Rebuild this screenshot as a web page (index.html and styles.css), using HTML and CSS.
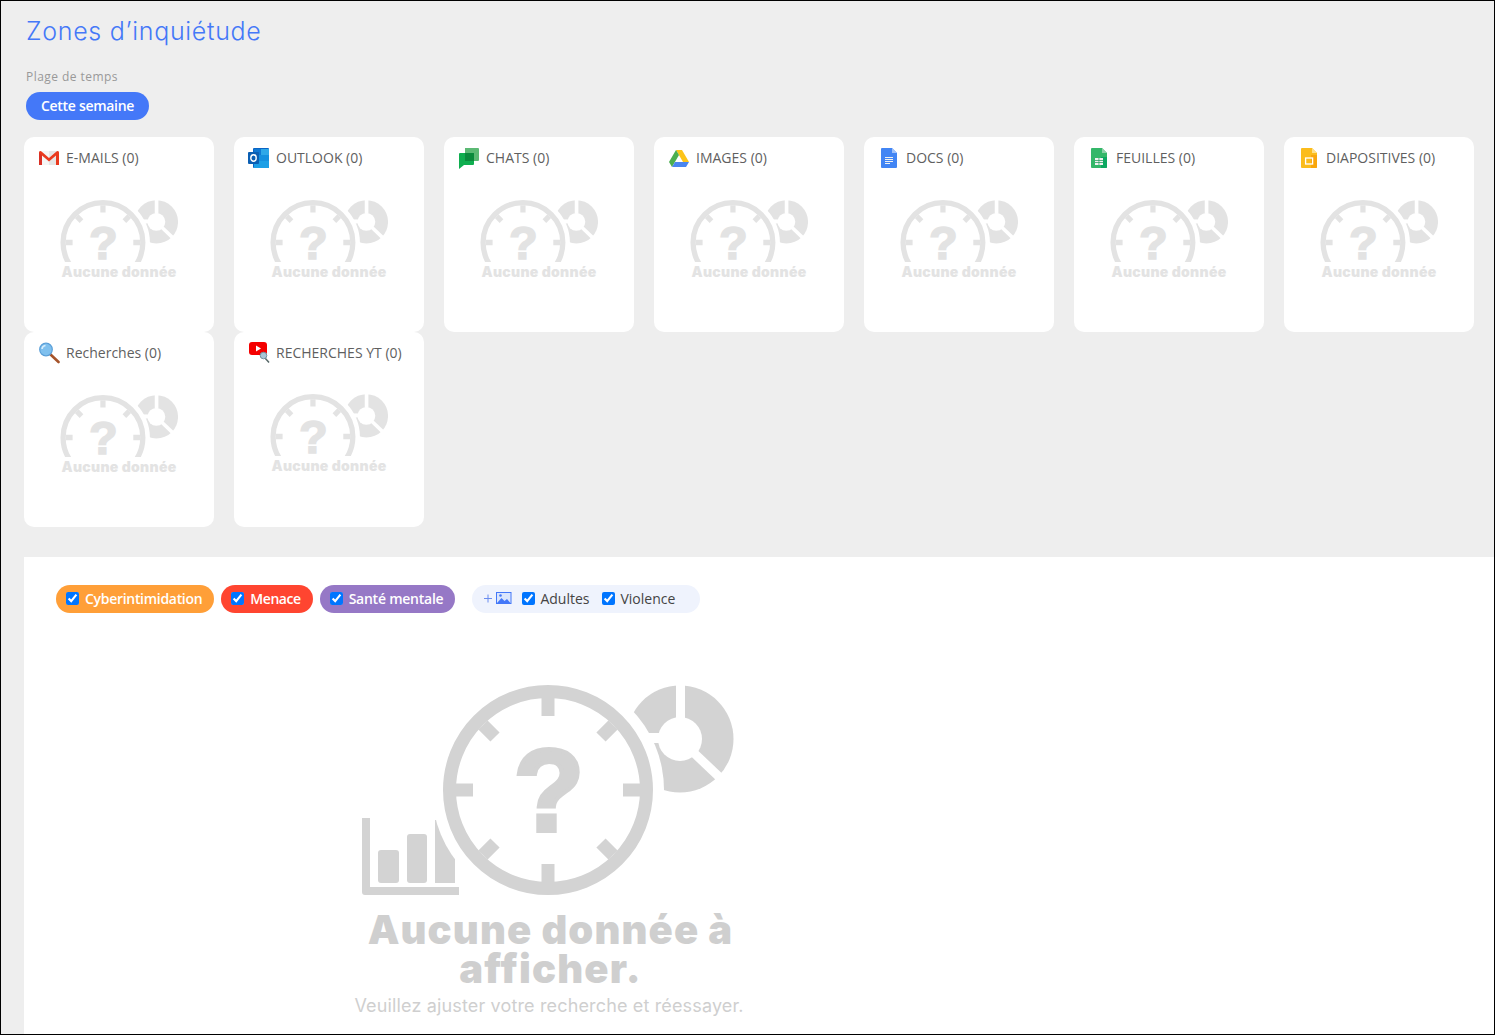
FILE: index.html
```html
<!DOCTYPE html>
<html lang="fr">
<head>
    <meta charset="UTF-8">
    <meta name="viewport" content="width=device-width, initial-scale=1.0">
    <title>Zones d'inquiétude</title>
    <link rel="stylesheet" href="styles.css">
</head>
<body>

<svg class="defs" width="0" height="0">
    <symbol id="nodata" viewBox="0 0 372 210" fill="currentColor">
        <!-- bars -->
        <path d="M0 133h8v69h89v8H3a3 3 0 0 1-3-3z"/>
        <rect x="16" y="165" width="21" height="33" rx="3"/>
        <rect x="45" y="149" width="20" height="49" rx="3"/>
        <rect x="73" y="135" width="20" height="63"/>
        <!-- donut -->
        <circle cx="318" cy="54" r="53.500"/>
        <circle cx="318" cy="54" r="22" fill="#fff"/>
        <rect x="314" y="0" width="9" height="34" fill="#fff"/>
        <rect x="262" y="48" width="38" height="10" fill="#fff"/>
        <line x1="332" y1="68" x2="372" y2="106" stroke="#fff" stroke-width="9"/>
        <!-- clock -->
        <circle cx="186" cy="105" r="116" fill="#fff"/>
        <circle cx="186" cy="105" r="98.500" fill="none" stroke="currentColor" stroke-width="13"/>
        <g stroke="currentColor" stroke-width="13">
            <line x1="186" y1="13" x2="186" y2="31"/>
            <line x1="186" y1="197" x2="186" y2="179"/>
            <line x1="94" y1="105" x2="111" y2="105"/>
            <line x1="278" y1="105" x2="261" y2="105"/>
            <line x1="121" y1="40" x2="133" y2="52"/>
            <line x1="251" y1="40" x2="239" y2="52"/>
            <line x1="121" y1="170" x2="133" y2="158"/>
            <line x1="251" y1="170" x2="239" y2="158"/>
        </g>
        <text class="nodata-mark" x="187" y="146" text-anchor="middle">?</text>
    </symbol>
</svg>

<div class="page">
    <h1 class="title">Zones d’inquiétude</h1>
    <div class="range-label">Plage de temps</div>
    <div class="range-pill">Cette semaine</div>

    <div class="cards">
        <div class="card">
            <div class="card-head">
                <svg class="card-icon" viewBox="0 0 22 22">
                    <path d="M2 4h9v14H2z" fill="#f5f5f5"/><path d="M11 4h9v14h-9z" fill="#e6e6e6"/>
                    <path d="M1 18V5.500C1 4 2.500 3.500 3.500 4.500L11 11l7.500-6.500C19.500 3.500 21 4 21 5.500V18h-3V8.500L11 14.500 4 8.500V18z" fill="#ea3a1e"/>
                    <path d="M1 5.500 4 8.500V18H1z" fill="#d93025"/>
                </svg>
                <span>E-MAILS (0)</span>
            </div>
            <svg class="card-art"><use href="#nodata" width="150.700" height="85"/></svg>
            <div class="card-empty">Aucune donnée</div>
        </div>

        <div class="card">
            <div class="card-head">
                <svg class="card-icon" viewBox="0 0 22 22">
                    <rect x="5" y="1" width="16" height="20" rx="1" fill="#0a64c4"/>
                    <rect x="6" y="2" width="7" height="6" fill="#0f78d4"/><rect x="13" y="2" width="8" height="6" fill="#2ea8e8"/>
                    <rect x="6" y="8" width="7" height="6" fill="#1490df"/><rect x="13" y="8" width="8" height="6" fill="#1490df"/>
                    <rect x="6" y="14" width="15" height="7" fill="#1c9fe6"/>
                    <rect x="0" y="5" width="11" height="12" rx="1" fill="#0b5fb3"/>
                    <ellipse cx="5.500" cy="11" rx="2.700" ry="3.200" fill="none" stroke="#fff" stroke-width="1.400"/>
                </svg>
                <span>OUTLOOK (0)</span>
            </div>
            <svg class="card-art"><use href="#nodata" width="150.700" height="85"/></svg>
            <div class="card-empty">Aucune donnée</div>
        </div>

        <div class="card">
            <div class="card-head">
                <svg class="card-icon" viewBox="0 0 22 22">
                    <path d="M7 1h13a1 1 0 0 1 1 1v11a1 1 0 0 1-1 1H7z" fill="#5bb974"/>
                    <path d="M2 6h13a1 1 0 0 1 1 1v10a1 1 0 0 1-1 1H6l-5 4V7a1 1 0 0 1 1-1z" fill="#0fae4f"/>
                    <rect x="7" y="6" width="9" height="8" fill="#0a8a3c"/>
                </svg>
                <span>CHATS (0)</span>
            </div>
            <svg class="card-art"><use href="#nodata" width="150.700" height="85"/></svg>
            <div class="card-empty">Aucune donnée</div>
        </div>

        <div class="card">
            <div class="card-head">
                <svg class="card-icon" viewBox="0 0 22 22">
                    <path d="M8 3h6l7 12h-6z" fill="#fcc419"/>
                    <path d="M8 3 1 15l3 5 7-12z" fill="#4caf50"/>
                    <path d="M4 20h14l3-5H7z" fill="#4a86f0"/>
                </svg>
                <span>IMAGES (0)</span>
            </div>
            <svg class="card-art"><use href="#nodata" width="150.700" height="85"/></svg>
            <div class="card-empty">Aucune donnée</div>
        </div>

        <div class="card">
            <div class="card-head">
                <svg class="card-icon" viewBox="0 0 22 22">
                    <path d="M4 1h10l5 5v14a1 1 0 0 1-1 1H4a1 1 0 0 1-1-1V2a1 1 0 0 1 1-1z" fill="#4285f4"/>
                    <path d="M14 1l5 5h-5z" fill="#a1c2fa"/>
                    <path d="M7 10h8v1H7zM7 12h8v1H7zM7 14h8v1H7zM7 16h5v1H7z" fill="#f1f1f1"/>
                </svg>
                <span>DOCS (0)</span>
            </div>
            <svg class="card-art"><use href="#nodata" width="150.700" height="85"/></svg>
            <div class="card-empty">Aucune donnée</div>
        </div>

        <div class="card">
            <div class="card-head">
                <svg class="card-icon" viewBox="0 0 22 22">
                    <path d="M4 1h10l5 5v14a1 1 0 0 1-1 1H4a1 1 0 0 1-1-1V2a1 1 0 0 1 1-1z" fill="#34b769"/>
                    <path d="M14 1l5 5h-5z" fill="#8ed1a9"/>
                    <path d="M13 21V10h6v10a1 1 0 0 1-1 1z" fill="#0da861"/>
                    <path d="M7 11h8v7H7z" fill="#f1f1f1"/>
                    <path d="M7 13h8v.7H7zM7 15.300h8v.7H7zM10.600 11h.7v7h-.7z" fill="#1f9d5b"/>
                </svg>
                <span>FEUILLES (0)</span>
            </div>
            <svg class="card-art"><use href="#nodata" width="150.700" height="85"/></svg>
            <div class="card-empty">Aucune donnée</div>
        </div>

        <div class="card">
            <div class="card-head">
                <svg class="card-icon" viewBox="0 0 22 22">
                    <path d="M4 1h10l5 5v14a1 1 0 0 1-1 1H4a1 1 0 0 1-1-1V2a1 1 0 0 1 1-1z" fill="#fbbc1c"/>
                    <path d="M14 1l5 5h-5z" fill="#fde08a"/>
                    <path d="M13 21V8h6v12a1 1 0 0 1-1 1z" fill="#f9a60c"/>
                    <rect x="7.600" y="11" width="7" height="6" fill="none" stroke="#fff" stroke-width="1.300"/>
                </svg>
                <span>DIAPOSITIVES (0)</span>
            </div>
            <svg class="card-art"><use href="#nodata" width="150.700" height="85"/></svg>
            <div class="card-empty">Aucune donnée</div>
        </div>

        <div class="card">
            <div class="card-head">
                <svg class="card-icon" viewBox="0 0 22 22">
                    <line x1="12" y1="12" x2="20.500" y2="20" stroke="#a5532a" stroke-width="2.600" stroke-linecap="round"/>
                    <circle cx="8" cy="7.500" r="6.300" fill="#7fc0ee" stroke="#5a9fd8" stroke-width="1.200"/>
                    <path d="M4 7a4 4 0 0 1 3.500-3.500" fill="none" stroke="#d8eefc" stroke-width="1.600"/>
                </svg>
                <span>Recherches (0)</span>
            </div>
            <svg class="card-art"><use href="#nodata" width="150.700" height="85"/></svg>
            <div class="card-empty">Aucune donnée</div>
        </div>

        <div class="card card-yt">
            <div class="card-head">
                <svg class="card-icon" viewBox="0 0 22 22">
                    <rect x="1" y="0" width="18" height="13" rx="3" fill="#f40000"/>
                    <path d="M8 3.500 13 6.500 8 9.500z" fill="#fff"/>
                    <line x1="17" y1="16" x2="21" y2="20.500" stroke="#566" stroke-width="1.500"/>
                    <circle cx="15.500" cy="13.500" r="3.300" fill="#a9c6d6" stroke="#74909e"/>
                </svg>
                <span>RECHERCHES YT (0)</span>
            </div>
            <svg class="card-art"><use href="#nodata" width="150.700" height="85"/></svg>
            <div class="card-empty">Aucune donnée</div>
        </div>
    </div>

    <div class="panel">
        <div class="filters">
            <label class="chip chip-orange"><input type="checkbox" checked>Cyberintimidation</label>
            <label class="chip chip-red"><input type="checkbox" checked>Menace</label>
            <label class="chip chip-purple"><input type="checkbox" checked>Santé mentale</label>
            <div class="image-filters">
                <svg class="image-add" viewBox="0 0 28 14">
                    <path d="M0 7.500h8M4 3.500v8" fill="none" stroke="#6b8df0" stroke-width="1"/>
                    <rect x="12.500" y="1.500" width="14.500" height="11" fill="#dbe6fc" stroke="#4478f8"/>
                    <path d="M13 12l4.500-5 3 3 2.500-2 3.500 4z" fill="#4478f8"/>
                    <circle cx="16.500" cy="4.500" r="1.300" fill="#4478f8"/>
                </svg>
                <label class="image-check"><input type="checkbox" checked>Adultes</label>
                <label class="image-check"><input type="checkbox" checked>Violence</label>
            </div>
        </div>

        <div class="empty">
            <svg class="empty-art"><use href="#nodata" width="372" height="210"/></svg>
            <h2 class="empty-title">Aucune donnée à<br>afficher.</h2>
            <p class="empty-text">Veuillez ajuster votre recherche et réessayer.</p>
        </div>
    </div>
</div>

</body>
</html>
```

FILE: styles.css
```css
* {
    box-sizing: border-box;
}
body {
    margin: 0;
    font-family: "Open Sans", Arial, sans-serif;
}
.defs {
    position: absolute;
}
.nodata-mark {
    font-family: "Liberation Sans", Arial, sans-serif;
    font-size: 116px;
    font-weight: 700;
    fill: currentColor;
    stroke: currentColor;
    stroke-width: 4px;
}
.page {
    height: 1035px;
    overflow: hidden;
    border: 1px solid #000;
    background: #eee;
}
.title {
    margin: 14px 0 0 25px;
    font-family: "Inter", sans-serif;
    font-size: 25px;
    line-height: 32px;
    font-weight: 300;
    letter-spacing: 0.7px;
    color: #4478f8;
}
.range-label {
    margin: 22px 0 0 25px;
    font-size: 12px;
    line-height: 16px;
    letter-spacing: 0.45px;
    color: #999;
}
.range-pill {
    width: 123px;
    height: 28px;
    margin: 7px 0 0 25px;
    border-radius: 14px;
    background: #4478f8;
    color: #fff;
    font-size: 14px;
    font-weight: 600;
    line-height: 28px;
    letter-spacing: -0.3px;
    text-align: center;
}
.cards {
    display: grid;
    grid-template-columns: repeat(7, 190px);
    column-gap: 20px;
    margin: 17px 0 0 23px;
}
.card {
    display: flex;
    flex-direction: column;
    align-items: center;
    height: 195px;
    padding-top: 9px;
    border-radius: 10px;
    background: #fff;
}
.card-head {
    display: flex;
    align-items: center;
    gap: 6px;
    align-self: stretch;
    height: 22px;
    padding-left: 14px;
    font-size: 14px;
    font-weight: 500;
    color: #5f5f5f;
}
.card-icon {
    width: 22px;
    height: 22px;
    margin-top: 2px;
    flex: none;
}
.card-art {
    width: 118px;
    height: 62px;
    margin-top: 32px;
    color: #e3e3e3;
}
.card-art use {
    transform: translateX(-32.400px);
}
.card-yt .card-art {
    margin-top: 31px;
}
.card-empty {
    margin-top: 1px;
    font-family: "Inter", sans-serif;
    font-size: 14px;
    font-weight: 900;
    line-height: 18px;
    letter-spacing: 0.3px;
    color: #e3e3e3;
}
.panel {
    height: 480px;
    margin: 30px 0 0 23px;
    padding: 28px 32px;
    background: #fff;
}
.filters {
    display: flex;
    align-items: center;
    gap: 7px;
}
.chip {
    display: flex;
    align-items: center;
    gap: 6px;
    height: 28px;
    padding: 0 12px 2px 10px;
    border-radius: 14px;
    color: #fff;
    font-size: 14px;
    font-weight: 600;
    letter-spacing: -0.3px;
}
input[type="checkbox"] {
    width: 13px;
    height: 13px;
    margin: 0;
}
.chip-orange {
    background: #ff9f38;
}
.chip-red {
    background: #ff4530;
    letter-spacing: -0.45px;
}
.chip-purple {
    background: #9678c6;
    letter-spacing: -0.24px;
}
.image-filters {
    display: flex;
    align-items: center;
    height: 28px;
    margin-left: 10px;
    padding: 0 25px 2px 12px;
    border-radius: 14px;
    background: #eff3fd;
    color: #444;
    font-size: 14px;
}
.image-add {
    width: 28px;
    height: 14px;
    margin-right: 10px;
}
.image-check {
    display: flex;
    align-items: center;
    gap: 5px;
    margin-right: 13px;
}
.image-check:last-child {
    margin-right: 0;
}
.empty {
    display: flex;
    flex-direction: column;
    align-items: center;
    width: 400px;
    margin: 72px 0 0 293px;
}
.empty-art {
    width: 372px;
    height: 210px;
    margin-right: 2px;
    flex: none;
    color: #d3d3d3;
}
.empty-title {
    margin: 15px 0 0;
    padding-left: 3px;
    font-family: "Inter", sans-serif;
    font-size: 40px;
    font-weight: 900;
    line-height: 39px;
    letter-spacing: 1.1px;
    text-align: center;
    color: #cfcfcf;
}
.empty-text {
    margin: 6px 0 0;
    font-family: "Inter", sans-serif;
    font-size: 18px;
    line-height: 24px;
    letter-spacing: 0.15px;
    white-space: nowrap;
    color: #cfcfcf;
}
```
